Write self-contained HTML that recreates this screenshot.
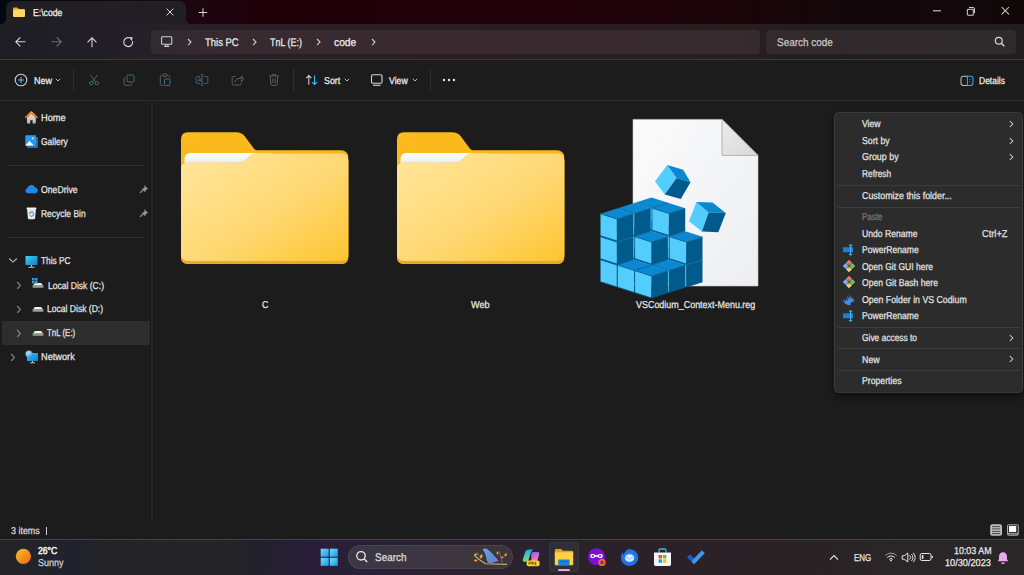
<!DOCTYPE html>
<html><head><meta charset="utf-8"><style>
html,body{margin:0;padding:0}
body{width:1024px;height:575px;overflow:hidden;position:relative;background:#1c1c1c;font-family:"Liberation Sans", sans-serif}
.t{position:absolute;line-height:1;white-space:nowrap;transform-origin:0 0;text-rendering:geometricPrecision;-webkit-text-stroke:0.25px currentColor}
.r{position:absolute}
.s{position:absolute;overflow:visible}
</style></head><body>
<div class="r" style="left:0px;top:0px;width:1024px;height:24px;background:linear-gradient(90deg,#050812 0%,#0e0a14 10%,#1b0710 18%,#1f0009 25%,#200009 55%,#1a0408 72%,#13060a 83%,#110709 100%);"></div>
<div class="r" style="left:0px;top:24px;width:1024px;height:35px;background:linear-gradient(90deg,#1d1d24 0%,#221e27 10%,#28202a 18%,#2a1e23 35%,#2a1d22 60%,#271e21 72%,#221e20 83%,#221e20 100%);"></div>
<div class="r" style="left:0px;top:59px;width:1024px;height:1px;background:#3a3a3a;"></div>
<div class="r" style="left:0px;top:60px;width:1024px;height:40px;background:#1c1c1c;"></div>
<div class="r" style="left:0px;top:100px;width:1024px;height:1px;background:#2b2b2b;"></div>
<div class="r" style="left:0px;top:101px;width:1024px;height:438px;background:#1c1c1c;"></div>
<div class="r" style="left:150px;top:101px;width:1px;height:421px;background:#181818;"></div>
<div class="r" style="left:151px;top:101px;width:2px;height:421px;background:#262626;"></div>
<div class="r" style="left:153px;top:101px;width:1px;height:421px;background:#181818;"></div>
<div class="r" style="left:6px;top:1px;width:180px;height:23px;background:#211f24;border-radius:7px 7px 0 0"></div>
<div class="r" style="left:1px;top:19px;width:5px;height:5px;background:radial-gradient(circle at 0 0,transparent 4.6px,#201e24 5.2px)"></div>
<div class="r" style="left:186px;top:19px;width:5px;height:5px;background:radial-gradient(circle at 100% 0,transparent 4.6px,#221e25 5.2px)"></div>
<svg class="s" style="left:12px;top:6px;" width="14" height="12" viewBox="0 0 14 12"><path d="M1 2.5a1 1 0 0 1 1-1h3.5l1.5 1.5h5a1 1 0 0 1 1 1V4H1z" fill="#e9a812"/><rect x="1" y="3.6" width="12" height="7.4" rx="1" fill="#ffd766"/></svg>
<div class="t" style="left:32.90px;top:8.70px;font-size:10px;color:#f5f5f5;font-weight:400;transform:scaleX(0.8641);">E:\code</div>
<svg class="s" style="left:165px;top:7px;" width="10" height="10" viewBox="0 0 10 10"><path d="M1.6 1.6l6.8 6.8M8.4 1.6l-6.8 6.8" stroke="#d8d8d8" stroke-width="1"/></svg>
<svg class="s" style="left:198px;top:7px;" width="11" height="11" viewBox="0 0 11 11"><path d="M5 1.3v8.4M0.8 5.5h8.4" stroke="#d8d8d8" stroke-width="1"/></svg>
<svg class="s" style="left:932px;top:6px;" width="12" height="10" viewBox="0 0 12 10"><path d="M1 4.8h8" stroke="#cfcfcf" stroke-width="1.1"/></svg>
<svg class="s" style="left:965px;top:5px;" width="12" height="12" viewBox="0 0 12 12"><rect x="2.3" y="4.2" width="6" height="6" rx="1" fill="none" stroke="#cfcfcf" stroke-width="1.05"/><path d="M4 2.4h3.8a1.7 1.7 0 0 1 1.7 1.7v3.8" fill="none" stroke="#cfcfcf" stroke-width="1.05"/></svg>
<svg class="s" style="left:1000px;top:6px;" width="11" height="10" viewBox="0 0 11 10"><path d="M1.6 1l7.4 7.4M9 1L1.6 8.4" stroke="#cfcfcf" stroke-width="1.05"/></svg>
<svg class="s" style="left:14px;top:36px;" width="13" height="12" viewBox="0 0 13 12"><path d="M11.5 5.8H2M6.3 1.3L1.8 5.8l4.5 4.5" fill="none" stroke="#d6d6d6" stroke-width="1.1"/></svg>
<svg class="s" style="left:50px;top:36px;" width="13" height="12" viewBox="0 0 13 12"><path d="M1.5 5.8H11M6.7 1.3l4.5 4.5-4.5 4.5" fill="none" stroke="#6e6e6e" stroke-width="1.1"/></svg>
<svg class="s" style="left:86px;top:36px;" width="12" height="12" viewBox="0 0 12 12"><path d="M6 11.3V1.8M1.5 6.3L6 1.8l4.5 4.5" fill="none" stroke="#d6d6d6" stroke-width="1.1"/></svg>
<svg class="s" style="left:122px;top:36px;" width="13" height="13" viewBox="0 0 13 13"><path d="M10.55 5.2A4.45 4.45 0 1 1 7.2 1.8" fill="none" stroke="#d6d6d6" stroke-width="1.1"/><path d="M6.6 0.9L10.6 1.3 9.9 5.1z" fill="#d6d6d6"/></svg>
<div class="r" style="left:151px;top:30px;width:609px;height:24px;background:linear-gradient(90deg,#302a31,#362a30 10%,#3a2a2f 45%,#392a2f 75%,#352b2f);border-radius:4px"></div>
<svg class="s" style="left:160px;top:35px;" width="14" height="14" viewBox="0 0 14 14"><rect x="1.6" y="1.7" width="10.2" height="7.6" rx="1" fill="none" stroke="#d0d0d0" stroke-width="1.05"/><path d="M4.2 11.4h5M5.6 9.4v2M7.8 9.4v2" stroke="#d0d0d0" stroke-width="1.05"/></svg>
<svg class="s" style="left:185.5px;top:37.9px;" width="7" height="8.2" viewBox="0 0 7 8.2"><path d="M2 1l3 3.1-3 3.1" fill="none" stroke="#cfcfcf" stroke-width="1.1"/></svg>
<div class="t" style="left:205.30px;top:37.90px;font-size:11px;color:#ededed;font-weight:400;transform:scaleX(0.8615);">This PC</div>
<svg class="s" style="left:250.5px;top:37.9px;" width="7" height="8.2" viewBox="0 0 7 8.2"><path d="M2 1l3 3.1-3 3.1" fill="none" stroke="#cfcfcf" stroke-width="1.1"/></svg>
<div class="t" style="left:270.00px;top:37.90px;font-size:11px;color:#ededed;font-weight:400;transform:scaleX(0.8137);">TnL (E:)</div>
<svg class="s" style="left:314.5px;top:37.9px;" width="7" height="8.2" viewBox="0 0 7 8.2"><path d="M2 1l3 3.1-3 3.1" fill="none" stroke="#cfcfcf" stroke-width="1.1"/></svg>
<div class="t" style="left:333.60px;top:38.00px;font-size:11px;color:#ededed;font-weight:400;transform:scaleX(0.9351);">code</div>
<svg class="s" style="left:369.5px;top:37.9px;" width="7" height="8.2" viewBox="0 0 7 8.2"><path d="M2 1l3 3.1-3 3.1" fill="none" stroke="#cfcfcf" stroke-width="1.1"/></svg>
<div class="r" style="left:766px;top:30px;width:250px;height:24px;background:linear-gradient(90deg,#332a2d,#302a2c 30%,#2f2a2c);border-radius:4px"></div>
<div class="t" style="left:777.40px;top:38.00px;font-size:11px;color:#c8c4c6;font-weight:400;transform:scaleX(0.9050);">Search code</div>
<svg class="s" style="left:994px;top:36px;" width="12" height="12" viewBox="0 0 12 12"><circle cx="4.8" cy="4.8" r="3.4" fill="none" stroke="#d8d8d8" stroke-width="1.2"/><path d="M7.3 7.3l3 3" stroke="#d8d8d8" stroke-width="1.4"/></svg>
<svg class="s" style="left:14px;top:73px;" width="14" height="14" viewBox="0 0 14 14"><circle cx="7" cy="7" r="5.8" fill="none" stroke="#cfcfcf" stroke-width="1.1"/><path d="M7 4v6M4 7h6" stroke="#4cc2ff" stroke-width="1.1"/></svg>
<div class="t" style="left:33.90px;top:76.90px;font-size:10px;color:#f0f0f0;font-weight:400;transform:scaleX(0.8987);">New</div>
<svg class="s" style="left:55px;top:77px;" width="6" height="6" viewBox="0 0 6 6"><path d="M0.8 1.8l2.2 2.2 2.2-2.2" fill="none" stroke="#cfcfcf" stroke-width="0.9"/></svg>
<div class="r" style="left:73px;top:69px;width:1px;height:22px;background:#2e2e2e;"></div>
<svg class="s" style="left:88px;top:74px;" width="12" height="12" viewBox="0 0 12 12"><path d="M2.5 1l5 6.8M9.5 1l-5 6.8" stroke="#5c5c5c" stroke-width="1"/><circle cx="3.3" cy="9.2" r="1.7" fill="none" stroke="#3b6d8c" stroke-width="1"/><circle cx="8.7" cy="9.2" r="1.7" fill="none" stroke="#3b6d8c" stroke-width="1"/></svg>
<svg class="s" style="left:123px;top:74px;" width="13" height="12" viewBox="0 0 13 12"><path d="M2.5 3.5h-0.3A1.3 1.3 0 0 0 1 4.8v5.2a1.3 1.3 0 0 0 1.3 1.3h5.2A1.3 1.3 0 0 0 8.8 10v-0.3" fill="none" stroke="#5c5c5c" stroke-width="1"/><rect x="4" y="1" width="7" height="7" rx="1.2" fill="none" stroke="#3b6d8c" stroke-width="1"/></svg>
<svg class="s" style="left:159px;top:73px;" width="13" height="13" viewBox="0 0 13 13"><path d="M3.5 2.5h-1A1.2 1.2 0 0 0 1.3 3.7v7.6a1.2 1.2 0 0 0 1.2 1.2h2M8.5 2.5h1a1.2 1.2 0 0 1 1.2 1.2v1" fill="none" stroke="#5c5c5c" stroke-width="1"/><rect x="4" y="1" width="4" height="2.5" rx="0.6" fill="none" stroke="#5c5c5c" stroke-width="1"/><rect x="5.5" y="6" width="5.5" height="6.5" rx="0.8" fill="none" stroke="#3b6d8c" stroke-width="1"/></svg>
<svg class="s" style="left:195px;top:74px;" width="14" height="12" viewBox="0 0 14 12"><path d="M5 2.5H2.5A1.3 1.3 0 0 0 1.2 3.8v4.4A1.3 1.3 0 0 0 2.5 9.5H5M9 2.5h2.5a1.3 1.3 0 0 1 1.3 1.3v4.4a1.3 1.3 0 0 1-1.3 1.3H9" fill="none" stroke="#5c5c5c" stroke-width="1"/><path d="M7 0.8v10.4M5.8 0.8h2.4M5.8 11.2h2.4" stroke="#3b6d8c" stroke-width="1"/><path d="M3.2 7.8l1.5-4 1.5 4M3.7 6.6h2" fill="none" stroke="#3b6d8c" stroke-width="0.8"/></svg>
<svg class="s" style="left:231px;top:74px;" width="13" height="12" viewBox="0 0 13 12"><path d="M4.5 2.5H2.5A1.3 1.3 0 0 0 1.2 3.8v5.9A1.3 1.3 0 0 0 2.5 11h6.2a1.3 1.3 0 0 0 1.3-1.3V8.5" fill="none" stroke="#5c5c5c" stroke-width="1"/><path d="M4 8.3c0.3-2.6 2.3-4 5-4h1.5V2l2.2 2.8-2.2 2.8V5.6" fill="none" stroke="#3b6d8c" stroke-width="1"/></svg>
<svg class="s" style="left:268px;top:73px;" width="12" height="13" viewBox="0 0 12 13"><path d="M1 3h10M4.3 3V1.6h3.4V3M2.2 3l0.7 8.2a1.2 1.2 0 0 0 1.2 1.1h3.8a1.2 1.2 0 0 0 1.2-1.1L9.8 3M4.8 5.5v4.5M7.2 5.5v4.5" fill="none" stroke="#5c5c5c" stroke-width="1"/></svg>
<div class="r" style="left:293px;top:69px;width:1px;height:22px;background:#2e2e2e;"></div>
<svg class="s" style="left:305px;top:74px;" width="14" height="12" viewBox="0 0 14 12"><path d="M3.8 10.8V1.6M1.2 4.2l2.6-2.6 2.6 2.6" fill="none" stroke="#d4d4d4" stroke-width="1.05"/><path d="M9.6 1.4v9.2M7 8l2.6 2.6 2.6-2.6" fill="none" stroke="#4cc2ff" stroke-width="1.05"/></svg>
<div class="t" style="left:323.50px;top:76.90px;font-size:10px;color:#f0f0f0;font-weight:400;transform:scaleX(0.8833);">Sort</div>
<svg class="s" style="left:344px;top:77px;" width="6" height="6" viewBox="0 0 6 6"><path d="M0.8 1.8l2.2 2.2 2.2-2.2" fill="none" stroke="#cfcfcf" stroke-width="0.9"/></svg>
<svg class="s" style="left:370px;top:73px;" width="14" height="14" viewBox="0 0 14 14"><rect x="1.5" y="1.8" width="10.5" height="8.5" rx="1.2" fill="none" stroke="#d4d4d4" stroke-width="1.1"/><path d="M3 12.3h7.5" stroke="#d4d4d4" stroke-width="1.1"/></svg>
<div class="t" style="left:389.00px;top:76.90px;font-size:10px;color:#f0f0f0;font-weight:400;transform:scaleX(0.8713);">View</div>
<svg class="s" style="left:412px;top:77px;" width="6" height="6" viewBox="0 0 6 6"><path d="M0.8 1.8l2.2 2.2 2.2-2.2" fill="none" stroke="#cfcfcf" stroke-width="0.9"/></svg>
<div class="r" style="left:430px;top:69px;width:1px;height:22px;background:#2e2e2e;"></div>
<svg class="s" style="left:442px;top:78px;" width="14" height="4" viewBox="0 0 14 4"><circle cx="2" cy="2" r="1.2" fill="#e6e6e6"/><circle cx="7" cy="2" r="1.2" fill="#e6e6e6"/><circle cx="12" cy="2" r="1.2" fill="#e6e6e6"/></svg>
<svg class="s" style="left:959.5px;top:74.5px;" width="15" height="12" viewBox="0 0 15 12"><path d="M7.4 1.2H3.3A2.3 2.3 0 0 0 1 3.5v4.6A2.3 2.3 0 0 0 3.3 10.4h4.1" fill="none" stroke="#bdbdbd" stroke-width="1.05"/><path d="M7.4 1.2h3.3a2.3 2.3 0 0 1 2.3 2.3v4.6a2.3 2.3 0 0 1-2.3 2.3H7.4z" fill="none" stroke="#3aa8e8" stroke-width="1.05"/><path d="M10 4.2v0.9M10 6.5v0.9" stroke="#3aa8e8" stroke-width="0.9"/></svg>
<div class="t" style="left:978.75px;top:76.90px;font-size:10px;color:#f0f0f0;font-weight:400;transform:scaleX(0.8505);">Details</div>
<svg class="s" style="left:24px;top:110px;" width="15" height="15" viewBox="0 0 15 15"><defs><linearGradient id="hroof" x1="0" y1="0" x2="0" y2="1"><stop offset="0" stop-color="#ffa040"/><stop offset="1" stop-color="#e8680c"/></linearGradient><linearGradient id="hbody" x1="0" y1="0" x2="0" y2="1"><stop offset="0" stop-color="#e0e0e0"/><stop offset="1" stop-color="#b8b8b8"/></linearGradient></defs><path d="M3 7.6V12.6Q3 13.6 4 13.6H6.2V10.2H8.6V13.6H10.8Q11.8 13.6 11.8 12.6V7.6L7.4 3.6z" fill="url(#hbody)"/><path d="M1.8 7.4L7.4 2.2 13 7.4" fill="none" stroke="url(#hroof)" stroke-width="1.8" stroke-linejoin="round" stroke-linecap="round"/></svg>
<div class="t" style="left:41.40px;top:114.00px;font-size:10px;color:#e8e8e8;font-weight:400;transform:scaleX(0.9258);">Home</div>
<svg class="s" style="left:24px;top:134px;" width="15" height="15" viewBox="0 0 15 15"><rect x="3" y="3" width="11" height="11" rx="1" fill="#1a6fc2"/><rect x="1.3" y="1.3" width="10.7" height="10.7" rx="1" fill="#2a9af0"/><path d="M1.3 11.4l4.2-4.5 4.2 4.5z" fill="#fff"/><circle cx="8.8" cy="4.3" r="0.9" fill="#fff"/></svg>
<div class="t" style="left:41.40px;top:137.50px;font-size:10px;color:#e8e8e8;font-weight:400;transform:scaleX(0.8460);">Gallery</div>
<div class="r" style="left:8px;top:165px;width:136px;height:1px;background:#2e2e2e;"></div>
<svg class="s" style="left:24px;top:183px;" width="15" height="12" viewBox="0 0 15 12"><path d="M3.6 10.2A2.6 2.6 0 0 1 3.4 5.1 4.2 4.2 0 0 1 11.2 4.4 3 3 0 0 1 11.8 10.2z" fill="#1d8ae6"/></svg>
<div class="t" style="left:41.40px;top:185.50px;font-size:10px;color:#e8e8e8;font-weight:400;transform:scaleX(0.8665);">OneDrive</div>
<svg class="s" style="left:139px;top:184px;" width="10" height="10" viewBox="0 0 10 10"><path d="M5.2 1l3.8 3.8-1.2 0.6-1.6 1.6 0 1.4L2.6 4.8 4 4.8 5.6 3.2z" fill="#8d959a"/><path d="M3.8 6.2L1 9" stroke="#8d959a" stroke-width="1.2"/></svg>
<svg class="s" style="left:25px;top:206px;" width="13" height="14" viewBox="0 0 13 14"><path d="M2 2.2h9l-0.9 10a1.2 1.2 0 0 1-1.2 1H4.1a1.2 1.2 0 0 1-1.2-1z" fill="#e9e9e9"/><rect x="1.6" y="1.4" width="9.8" height="1.6" rx="0.6" fill="#f6f6f6"/><path d="M4.5 8.2a2.2 2.2 0 0 1 3.8-1.6M8.6 7.4a2.2 2.2 0 0 1-3.6 2.2" fill="none" stroke="#2a8fe4" stroke-width="1.1"/></svg>
<div class="t" style="left:41.40px;top:210.00px;font-size:10px;color:#e8e8e8;font-weight:400;transform:scaleX(0.8447);">Recycle Bin</div>
<svg class="s" style="left:139px;top:208px;" width="10" height="10" viewBox="0 0 10 10"><path d="M5.2 1l3.8 3.8-1.2 0.6-1.6 1.6 0 1.4L2.6 4.8 4 4.8 5.6 3.2z" fill="#8d959a"/><path d="M3.8 6.2L1 9" stroke="#8d959a" stroke-width="1.2"/></svg>
<div class="r" style="left:8px;top:237px;width:136px;height:1px;background:#2e2e2e;"></div>
<svg class="s" style="left:8px;top:257px;" width="10" height="7" viewBox="0 0 10 7"><path d="M1.2 1.5l3.8 3.6 3.8-3.6" fill="none" stroke="#b4b4b4" stroke-width="1.1"/></svg>
<svg class="s" style="left:24px;top:254px;" width="15" height="15" viewBox="0 0 15 15"><defs><linearGradient id="pcg" x1="0" y1="0" x2="1" y2="1"><stop offset="0" stop-color="#38d6ee"/><stop offset="1" stop-color="#1778cc"/></linearGradient></defs><rect x="1.5" y="2" width="12" height="9" rx="0.6" fill="url(#pcg)"/><path d="M7.5 11v1.5M4.5 13.2h6" stroke="#c8c8c8" stroke-width="1.1"/></svg>
<div class="t" style="left:41.30px;top:257.45px;font-size:10px;color:#e8e8e8;font-weight:400;transform:scaleX(0.8296);">This PC</div>
<div class="r" style="left:2px;top:321px;width:148px;height:24px;background:#2d2d2d;"></div>
<svg class="s" style="left:16px;top:281px;" width="6" height="9" viewBox="0 0 6 9"><path d="M1.2 1l3.2 3.4-3.2 3.4" fill="none" stroke="#8a8a8a" stroke-width="1.1"/></svg>
<svg class="s" style="left:32px;top:282px;" width="12" height="7" viewBox="0 0 12 7"><path d="M1.5 3.2Q2 1 3.5 1h5Q10 1 10.5 3.2z" fill="#f4f4f4"/><rect x="0.6" y="3" width="10.8" height="2.8" rx="0.6" fill="#9c9c9c"/><rect x="1.6" y="4" width="2" height="0.9" fill="#3fc43f"/></svg>
<svg class="s" style="left:31.5px;top:278px;" width="6" height="6" viewBox="0 0 6 6"><rect x="0" y="0" width="2.5" height="2.5" fill="#2a9af0"/><rect x="3" y="0" width="2.5" height="2.5" fill="#2a9af0"/><rect x="0" y="3" width="2.5" height="2.5" fill="#2a9af0"/><rect x="3" y="3" width="2.5" height="2.5" fill="#2a9af0"/></svg>
<div class="t" style="left:47.50px;top:281.70px;font-size:10px;color:#e8e8e8;font-weight:400;transform:scaleX(0.8540);">Local Disk (C:)</div>
<svg class="s" style="left:16px;top:305px;" width="6" height="9" viewBox="0 0 6 9"><path d="M1.2 1l3.2 3.4-3.2 3.4" fill="none" stroke="#8a8a8a" stroke-width="1.1"/></svg>
<svg class="s" style="left:32px;top:306px;" width="12" height="7" viewBox="0 0 12 7"><path d="M1.5 3.2Q2 1 3.5 1h5Q10 1 10.5 3.2z" fill="#f4f4f4"/><rect x="0.6" y="3" width="10.8" height="2.8" rx="0.6" fill="#9c9c9c"/><rect x="1.6" y="4" width="2" height="0.9" fill="#3fc43f"/></svg>
<div class="t" style="left:47.30px;top:305.30px;font-size:10px;color:#e8e8e8;font-weight:400;transform:scaleX(0.8556);">Local Disk (D:)</div>
<svg class="s" style="left:16px;top:329px;" width="6" height="9" viewBox="0 0 6 9"><path d="M1.2 1l3.2 3.4-3.2 3.4" fill="none" stroke="#8a8a8a" stroke-width="1.1"/></svg>
<svg class="s" style="left:32px;top:330px;" width="12" height="7" viewBox="0 0 12 7"><path d="M1.5 3.2Q2 1 3.5 1h5Q10 1 10.5 3.2z" fill="#f4f4f4"/><rect x="0.6" y="3" width="10.8" height="2.8" rx="0.6" fill="#9c9c9c"/><rect x="1.6" y="4" width="2" height="0.9" fill="#3fc43f"/></svg>
<div class="t" style="left:47.30px;top:329.30px;font-size:10px;color:#e8e8e8;font-weight:400;transform:scaleX(0.7888);">TnL (E:)</div>
<svg class="s" style="left:10px;top:353px;" width="6" height="9" viewBox="0 0 6 9"><path d="M1.2 1l3.2 3.4-3.2 3.4" fill="none" stroke="#8a8a8a" stroke-width="1.1"/></svg>
<svg class="s" style="left:24px;top:349px;" width="15" height="15" viewBox="0 0 15 15"><defs><linearGradient id="ng" x1="0" y1="0" x2="1" y2="1"><stop offset="0" stop-color="#30c8ea"/><stop offset="1" stop-color="#1778cc"/></linearGradient><radialGradient id="gl" cx="0.4" cy="0.35" r="0.7"><stop offset="0" stop-color="#bfe6ff"/><stop offset="1" stop-color="#2f8fd8"/></radialGradient></defs><rect x="3" y="4" width="11" height="8" rx="0.5" fill="url(#ng)"/><path d="M8.5 12v1.3M6 13.8h5" stroke="#c8c8c8" stroke-width="1"/><circle cx="5" cy="5" r="3.6" fill="url(#gl)"/></svg>
<div class="t" style="left:41.40px;top:353.20px;font-size:10px;color:#e8e8e8;font-weight:400;transform:scaleX(0.9210);">Network</div>
<svg class="s" style="left:180.6px;top:132px;" width="170" height="134" viewBox="0 0 170 134"><defs><linearGradient id="fb180" x1="0" y1="0" x2="1" y2="1"><stop offset="0" stop-color="#fcba1c"/><stop offset="1" stop-color="#f4b51c"/></linearGradient><linearGradient id="ff180" x1="0" y1="0" x2="1" y2="1"><stop offset="0" stop-color="#ffe69c"/><stop offset="0.55" stop-color="#ffd873"/><stop offset="1" stop-color="#fdc52f"/></linearGradient><linearGradient id="fp180" x1="0" y1="0" x2="0" y2="1"><stop offset="0" stop-color="#ffffff"/><stop offset="1" stop-color="#d9dde3"/></linearGradient></defs><path d="M0 125V7.3Q0 0.3 7 0.3H55Q60.5 0.3 63.5 4L73 16.8Q74 18.2 76 18.2H159.5Q167.3 18.2 167.3 26V125Q167.3 132 160.3 132H7Q0 132 0 125z" fill="url(#fb180)"/><path d="M3.5 27Q3.5 21 9.5 21H90V40H3.5z" fill="url(#fp180)"/><path d="M0 125V37Q0 30.8 6 30.8H57Q62 30.8 65.5 27.3L69.5 23.5Q71.5 21.5 75 21.5H160.3Q167.3 21.5 167.3 28.5V125Q167.3 132 160.3 132H7Q0 132 0 125z" fill="#eaa928"/><path d="M0 122V37Q0 30.8 6 30.8H57Q62 30.8 65.5 27.3L69.5 23.5Q71.5 21.5 75 21.5H160.3Q167.3 21.5 167.3 28.5V122Q167.3 129 160.3 129H7Q0 129 0 122z" fill="url(#ff180)"/></svg>
<div class="t" style="left:261.99px;top:300.70px;font-size:10px;color:#e8e8e8;font-weight:400;transform:scaleX(0.8900);">C</div>
<svg class="s" style="left:396.6px;top:132px;" width="170" height="134" viewBox="0 0 170 134"><defs><linearGradient id="fb396" x1="0" y1="0" x2="1" y2="1"><stop offset="0" stop-color="#fcba1c"/><stop offset="1" stop-color="#f4b51c"/></linearGradient><linearGradient id="ff396" x1="0" y1="0" x2="1" y2="1"><stop offset="0" stop-color="#ffe69c"/><stop offset="0.55" stop-color="#ffd873"/><stop offset="1" stop-color="#fdc52f"/></linearGradient><linearGradient id="fp396" x1="0" y1="0" x2="0" y2="1"><stop offset="0" stop-color="#ffffff"/><stop offset="1" stop-color="#d9dde3"/></linearGradient></defs><path d="M0 125V7.3Q0 0.3 7 0.3H55Q60.5 0.3 63.5 4L73 16.8Q74 18.2 76 18.2H159.5Q167.3 18.2 167.3 26V125Q167.3 132 160.3 132H7Q0 132 0 125z" fill="url(#fb396)"/><path d="M3.5 27Q3.5 21 9.5 21H90V40H3.5z" fill="url(#fp396)"/><path d="M0 125V37Q0 30.8 6 30.8H57Q62 30.8 65.5 27.3L69.5 23.5Q71.5 21.5 75 21.5H160.3Q167.3 21.5 167.3 28.5V125Q167.3 132 160.3 132H7Q0 132 0 125z" fill="#eaa928"/><path d="M0 122V37Q0 30.8 6 30.8H57Q62 30.8 65.5 27.3L69.5 23.5Q71.5 21.5 75 21.5H160.3Q167.3 21.5 167.3 28.5V122Q167.3 129 160.3 129H7Q0 129 0 122z" fill="url(#ff396)"/></svg>
<div class="t" style="left:471.10px;top:300.70px;font-size:10px;color:#e8e8e8;font-weight:400;transform:scaleX(0.9127);">Web</div>
<svg class="s" style="left:590px;top:110px;" width="180" height="200" viewBox="0 0 180 200"><defs><linearGradient id="paper" x1="0" y1="0" x2="1" y2="1"><stop offset="0" stop-color="#fbfbfb"/><stop offset="1" stop-color="#eceef1"/></linearGradient><linearGradient id="fold" x1="0" y1="0" x2="1" y2="1"><stop offset="0" stop-color="#ececec"/><stop offset="1" stop-color="#d8d8d8"/></linearGradient></defs><path d="M43 9.400000000000006H132L168 45.400000000000006V176H43z" fill="url(#paper)" stroke="#c9c9c9" stroke-width="0.6"/><path d="M132 9.400000000000006V45.400000000000006H168z" fill="url(#fold)" stroke="#a3a3a3" stroke-width="0.8" stroke-linejoin="round"/><polygon points="61.50,166.00 61.50,144.00 45.10,138.80 45.10,160.80" fill="#52cdfd"/><polygon points="61.50,166.00 77.90,160.80 77.90,138.80 61.50,144.00" fill="#005b8c"/><polygon points="61.50,144.00 45.10,138.80 61.50,133.60 77.90,138.80" fill="#0a88d0"/><polyline points="45.10,160.80 61.50,166.00 77.90,160.80" fill="none" stroke="#0b4f7c" stroke-width="0.9"/><polyline points="45.10,138.80 61.50,144.00 77.90,138.80" fill="none" stroke="#0b5f96" stroke-width="0.7"/><polygon points="61.50,143.00 61.50,121.00 45.10,115.80 45.10,137.80" fill="#52cdfd"/><polygon points="61.50,143.00 77.90,137.80 77.90,115.80 61.50,121.00" fill="#005b8c"/><polygon points="61.50,121.00 45.10,115.80 61.50,110.60 77.90,115.80" fill="#0a88d0"/><polyline points="45.10,137.80 61.50,143.00 77.90,137.80" fill="none" stroke="#0b4f7c" stroke-width="0.9"/><polyline points="45.10,115.80 61.50,121.00 77.90,115.80" fill="none" stroke="#0b5f96" stroke-width="0.7"/><polygon points="61.50,120.00 61.50,98.00 45.10,92.80 45.10,114.80" fill="#52cdfd"/><polygon points="61.50,120.00 77.90,114.80 77.90,92.80 61.50,98.00" fill="#005b8c"/><polygon points="61.50,98.00 45.10,92.80 61.50,87.60 77.90,92.80" fill="#0a88d0"/><polyline points="45.10,114.80 61.50,120.00 77.90,114.80" fill="none" stroke="#0b4f7c" stroke-width="0.9"/><polyline points="45.10,92.80 61.50,98.00 77.90,92.80" fill="none" stroke="#0b5f96" stroke-width="0.7"/><polygon points="78.80,171.50 78.80,149.50 62.40,144.30 62.40,166.30" fill="#52cdfd"/><polygon points="78.80,171.50 95.20,166.30 95.20,144.30 78.80,149.50" fill="#005b8c"/><polygon points="78.80,149.50 62.40,144.30 78.80,139.10 95.20,144.30" fill="#0a88d0"/><polyline points="62.40,166.30 78.80,171.50 95.20,166.30" fill="none" stroke="#0b4f7c" stroke-width="0.9"/><polyline points="62.40,144.30 78.80,149.50 95.20,144.30" fill="none" stroke="#0b5f96" stroke-width="0.7"/><polygon points="44.20,171.50 44.20,149.50 27.80,144.30 27.80,166.30" fill="#52cdfd"/><polygon points="44.20,171.50 60.60,166.30 60.60,144.30 44.20,149.50" fill="#005b8c"/><polygon points="44.20,149.50 27.80,144.30 44.20,139.10 60.60,144.30" fill="#0a88d0"/><polyline points="27.80,166.30 44.20,171.50 60.60,166.30" fill="none" stroke="#0b4f7c" stroke-width="0.9"/><polyline points="27.80,144.30 44.20,149.50 60.60,144.30" fill="none" stroke="#0b5f96" stroke-width="0.7"/><polygon points="78.80,148.50 78.80,126.50 62.40,121.30 62.40,143.30" fill="#52cdfd"/><polygon points="78.80,148.50 95.20,143.30 95.20,121.30 78.80,126.50" fill="#005b8c"/><polygon points="78.80,126.50 62.40,121.30 78.80,116.10 95.20,121.30" fill="#0a88d0"/><polyline points="62.40,143.30 78.80,148.50 95.20,143.30" fill="none" stroke="#0b4f7c" stroke-width="0.9"/><polyline points="62.40,121.30 78.80,126.50 95.20,121.30" fill="none" stroke="#0b5f96" stroke-width="0.7"/><polygon points="44.20,148.50 44.20,126.50 27.80,121.30 27.80,143.30" fill="#52cdfd"/><polygon points="44.20,148.50 60.60,143.30 60.60,121.30 44.20,126.50" fill="#005b8c"/><polygon points="44.20,126.50 27.80,121.30 44.20,116.10 60.60,121.30" fill="#0a88d0"/><polyline points="27.80,143.30 44.20,148.50 60.60,143.30" fill="none" stroke="#0b4f7c" stroke-width="0.9"/><polyline points="27.80,121.30 44.20,126.50 60.60,121.30" fill="none" stroke="#0b5f96" stroke-width="0.7"/><polygon points="78.80,125.50 78.80,103.50 62.40,98.30 62.40,120.30" fill="#52cdfd"/><polygon points="78.80,125.50 95.20,120.30 95.20,98.30 78.80,103.50" fill="#005b8c"/><polygon points="78.80,103.50 62.40,98.30 78.80,93.10 95.20,98.30" fill="#0a88d0"/><polyline points="62.40,120.30 78.80,125.50 95.20,120.30" fill="none" stroke="#0b4f7c" stroke-width="0.9"/><polyline points="62.40,98.30 78.80,103.50 95.20,98.30" fill="none" stroke="#0b5f96" stroke-width="0.7"/><polygon points="44.20,125.50 44.20,103.50 27.80,98.30 27.80,120.30" fill="#52cdfd"/><polygon points="44.20,125.50 60.60,120.30 60.60,98.30 44.20,103.50" fill="#005b8c"/><polygon points="44.20,103.50 27.80,98.30 44.20,93.10 60.60,98.30" fill="#0a88d0"/><polyline points="27.80,120.30 44.20,125.50 60.60,120.30" fill="none" stroke="#0b4f7c" stroke-width="0.9"/><polyline points="27.80,98.30 44.20,103.50 60.60,98.30" fill="none" stroke="#0b5f96" stroke-width="0.7"/><polygon points="96.10,177.00 96.10,155.00 79.70,149.80 79.70,171.80" fill="#52cdfd"/><polygon points="96.10,177.00 112.50,171.80 112.50,149.80 96.10,155.00" fill="#005b8c"/><polygon points="96.10,155.00 79.70,149.80 96.10,144.60 112.50,149.80" fill="#0a88d0"/><polyline points="79.70,171.80 96.10,177.00 112.50,171.80" fill="none" stroke="#0b4f7c" stroke-width="0.9"/><polyline points="79.70,149.80 96.10,155.00 112.50,149.80" fill="none" stroke="#0b5f96" stroke-width="0.7"/><polygon points="61.50,177.00 61.50,155.00 45.10,149.80 45.10,171.80" fill="#52cdfd"/><polygon points="61.50,177.00 77.90,171.80 77.90,149.80 61.50,155.00" fill="#005b8c"/><polygon points="61.50,155.00 45.10,149.80 61.50,144.60 77.90,149.80" fill="#0a88d0"/><polyline points="45.10,171.80 61.50,177.00 77.90,171.80" fill="none" stroke="#0b4f7c" stroke-width="0.9"/><polyline points="45.10,149.80 61.50,155.00 77.90,149.80" fill="none" stroke="#0b5f96" stroke-width="0.7"/><polygon points="26.90,177.00 26.90,155.00 10.50,149.80 10.50,171.80" fill="#52cdfd"/><polygon points="26.90,177.00 43.30,171.80 43.30,149.80 26.90,155.00" fill="#005b8c"/><polygon points="26.90,155.00 10.50,149.80 26.90,144.60 43.30,149.80" fill="#0a88d0"/><polyline points="10.50,171.80 26.90,177.00 43.30,171.80" fill="none" stroke="#0b4f7c" stroke-width="0.9"/><polyline points="10.50,149.80 26.90,155.00 43.30,149.80" fill="none" stroke="#0b5f96" stroke-width="0.7"/><polygon points="96.10,154.00 96.10,132.00 79.70,126.80 79.70,148.80" fill="#52cdfd"/><polygon points="96.10,154.00 112.50,148.80 112.50,126.80 96.10,132.00" fill="#005b8c"/><polygon points="96.10,132.00 79.70,126.80 96.10,121.60 112.50,126.80" fill="#0a88d0"/><polyline points="79.70,148.80 96.10,154.00 112.50,148.80" fill="none" stroke="#0b4f7c" stroke-width="0.9"/><polyline points="79.70,126.80 96.10,132.00 112.50,126.80" fill="none" stroke="#0b5f96" stroke-width="0.7"/><polygon points="61.50,154.00 61.50,132.00 45.10,126.80 45.10,148.80" fill="#52cdfd"/><polygon points="61.50,154.00 77.90,148.80 77.90,126.80 61.50,132.00" fill="#005b8c"/><polygon points="61.50,132.00 45.10,126.80 61.50,121.60 77.90,126.80" fill="#0a88d0"/><polyline points="45.10,148.80 61.50,154.00 77.90,148.80" fill="none" stroke="#0b4f7c" stroke-width="0.9"/><polyline points="45.10,126.80 61.50,132.00 77.90,126.80" fill="none" stroke="#0b5f96" stroke-width="0.7"/><polygon points="26.90,154.00 26.90,132.00 10.50,126.80 10.50,148.80" fill="#52cdfd"/><polygon points="26.90,154.00 43.30,148.80 43.30,126.80 26.90,132.00" fill="#005b8c"/><polygon points="26.90,132.00 10.50,126.80 26.90,121.60 43.30,126.80" fill="#0a88d0"/><polyline points="10.50,148.80 26.90,154.00 43.30,148.80" fill="none" stroke="#0b4f7c" stroke-width="0.9"/><polyline points="10.50,126.80 26.90,132.00 43.30,126.80" fill="none" stroke="#0b5f96" stroke-width="0.7"/><polygon points="26.90,131.00 26.90,109.00 10.50,103.80 10.50,125.80" fill="#52cdfd"/><polygon points="26.90,131.00 43.30,125.80 43.30,103.80 26.90,109.00" fill="#005b8c"/><polygon points="26.90,109.00 10.50,103.80 26.90,98.60 43.30,103.80" fill="#0a88d0"/><polyline points="10.50,125.80 26.90,131.00 43.30,125.80" fill="none" stroke="#0b4f7c" stroke-width="0.9"/><polyline points="10.50,103.80 26.90,109.00 43.30,103.80" fill="none" stroke="#0b5f96" stroke-width="0.7"/><polygon points="78.80,182.50 78.80,160.50 62.40,155.30 62.40,177.30" fill="#52cdfd"/><polygon points="78.80,182.50 95.20,177.30 95.20,155.30 78.80,160.50" fill="#005b8c"/><polygon points="78.80,160.50 62.40,155.30 78.80,150.10 95.20,155.30" fill="#0a88d0"/><polyline points="62.40,177.30 78.80,182.50 95.20,177.30" fill="none" stroke="#0b4f7c" stroke-width="0.9"/><polyline points="62.40,155.30 78.80,160.50 95.20,155.30" fill="none" stroke="#0b5f96" stroke-width="0.7"/><polygon points="44.20,182.50 44.20,160.50 27.80,155.30 27.80,177.30" fill="#52cdfd"/><polygon points="44.20,182.50 60.60,177.30 60.60,155.30 44.20,160.50" fill="#005b8c"/><polygon points="44.20,160.50 27.80,155.30 44.20,150.10 60.60,155.30" fill="#0a88d0"/><polyline points="27.80,177.30 44.20,182.50 60.60,177.30" fill="none" stroke="#0b4f7c" stroke-width="0.9"/><polyline points="27.80,155.30 44.20,160.50 60.60,155.30" fill="none" stroke="#0b5f96" stroke-width="0.7"/><polygon points="61.50,188.00 61.50,166.00 45.10,160.80 45.10,182.80" fill="#52cdfd"/><polygon points="61.50,188.00 77.90,182.80 77.90,160.80 61.50,166.00" fill="#005b8c"/><polygon points="61.50,166.00 45.10,160.80 61.50,155.60 77.90,160.80" fill="#0a88d0"/><polyline points="45.10,182.80 61.50,188.00 77.90,182.80" fill="none" stroke="#0b4f7c" stroke-width="0.9"/><polyline points="45.10,160.80 61.50,166.00 77.90,160.80" fill="none" stroke="#0b5f96" stroke-width="0.7"/><polygon points="77.20,54.90 86.60,68.10 74.80,84.40 65.00,71.60" fill="#52cdfd"/><polygon points="77.20,54.90 93.20,59.70 100.50,72.30 86.60,68.10" fill="#0a88d0"/><polygon points="86.60,68.10 100.50,72.30 90.80,89.00 74.80,84.40" fill="#005b8c"/><polygon points="106.40,91.90 118.60,102.60 111.90,121.60 99.00,111.20" fill="#52cdfd"/><polygon points="106.40,91.90 122.50,92.40 135.80,103.00 118.60,102.60" fill="#0a88d0"/><polygon points="118.60,102.60 135.80,103.00 128.30,122.20 111.90,121.60" fill="#005b8c"/></svg>
<div class="t" style="left:635.70px;top:300.70px;font-size:10px;color:#e8e8e8;font-weight:400;transform:scaleX(0.8943);">VSCodium_Context-Menu.reg</div>
<div class="r" style="left:834px;top:112px;width:189px;height:281px;background:#2c2c2c;border:1px solid #3a3a3a;box-sizing:border-box;border-radius:4.5px;box-shadow:0 4px 10px rgba(0,0,0,0.45)"></div>
<div class="r" style="left:838px;top:185px;width:182px;height:1px;background:#3d3d3d;"></div>
<div class="r" style="left:838px;top:206.6px;width:182px;height:1px;background:#3d3d3d;"></div>
<div class="r" style="left:838px;top:326.5px;width:182px;height:1px;background:#3d3d3d;"></div>
<div class="r" style="left:838px;top:348.4px;width:182px;height:1px;background:#3d3d3d;"></div>
<div class="r" style="left:838px;top:370.2px;width:182px;height:1px;background:#3d3d3d;"></div>
<div class="t" style="left:862.20px;top:120.20px;font-size:10px;color:#e4e4e4;font-weight:400;transform:scaleX(0.8643);">View</div>
<svg class="s" style="left:1008px;top:119.8px;" width="7" height="8" viewBox="0 0 7 8"><path d="M1.8 1l3 3-3 3" fill="none" stroke="#d0d0d0" stroke-width="1.05"/></svg>
<div class="t" style="left:862.20px;top:137.00px;font-size:10px;color:#e4e4e4;font-weight:400;transform:scaleX(0.8712);">Sort by</div>
<svg class="s" style="left:1008px;top:136.6px;" width="7" height="8" viewBox="0 0 7 8"><path d="M1.8 1l3 3-3 3" fill="none" stroke="#d0d0d0" stroke-width="1.05"/></svg>
<div class="t" style="left:862.20px;top:153.40px;font-size:10px;color:#e4e4e4;font-weight:400;transform:scaleX(0.8923);">Group by</div>
<svg class="s" style="left:1008px;top:153.0px;" width="7" height="8" viewBox="0 0 7 8"><path d="M1.8 1l3 3-3 3" fill="none" stroke="#d0d0d0" stroke-width="1.05"/></svg>
<div class="t" style="left:862.20px;top:170.00px;font-size:10px;color:#e4e4e4;font-weight:400;transform:scaleX(0.8312);">Refresh</div>
<div class="t" style="left:862.20px;top:191.60px;font-size:10px;color:#e4e4e4;font-weight:400;transform:scaleX(0.8878);">Customize this folder...</div>
<div class="t" style="left:862.20px;top:213.00px;font-size:10px;color:#7a7a7a;font-weight:400;transform:scaleX(0.7939);">Paste</div>
<div class="t" style="left:862.20px;top:230.00px;font-size:10px;color:#e4e4e4;font-weight:400;transform:scaleX(0.8607);">Undo Rename</div>
<div class="t" style="left:982.20px;top:230.00px;font-size:10px;color:#e4e4e4;font-weight:400;transform:scaleX(0.9273);">Ctrl+Z</div>
<div class="t" style="left:862.20px;top:246.20px;font-size:10px;color:#e4e4e4;font-weight:400;transform:scaleX(0.8588);">PowerRename</div>
<svg class="s" style="left:842px;top:244.2px;" width="13" height="12" viewBox="0 0 13 12"><rect x="1" y="3.2" width="10" height="5" rx="0.6" fill="#1a80d6"/><path d="M8.6 1.2v9.4M7 1.2h3.2M7 10.6h3.2" stroke="#3fb6f2" stroke-width="1.2"/></svg>
<div class="t" style="left:862.20px;top:262.80px;font-size:10px;color:#e4e4e4;font-weight:400;transform:scaleX(0.8516);">Open Git GUI here</div>
<svg class="s" style="left:842.5px;top:259.8px;" width="12" height="12" viewBox="0 0 12 12"><g transform="rotate(45 6 6)"><rect x="1.6" y="1.6" width="4.2" height="4.2" fill="#ef7b78"/><rect x="6.2" y="1.6" width="4.2" height="4.2" fill="#6cc34b"/><rect x="6.2" y="6.2" width="4.2" height="4.2" fill="#f2d77a"/><rect x="1.6" y="6.2" width="4.2" height="4.2" fill="#78b2f7"/></g><path d="M6 3.2v5.6M4.4 6h3.2" stroke="#3a3a3a" stroke-width="0.55"/></svg>
<div class="t" style="left:862.20px;top:279.20px;font-size:10px;color:#e4e4e4;font-weight:400;transform:scaleX(0.8588);">Open Git Bash here</div>
<svg class="s" style="left:842.5px;top:276.2px;" width="12" height="12" viewBox="0 0 12 12"><g transform="rotate(45 6 6)"><rect x="1.6" y="1.6" width="4.2" height="4.2" fill="#ef7b78"/><rect x="6.2" y="1.6" width="4.2" height="4.2" fill="#6cc34b"/><rect x="6.2" y="6.2" width="4.2" height="4.2" fill="#f2d77a"/><rect x="1.6" y="6.2" width="4.2" height="4.2" fill="#78b2f7"/></g><path d="M6 3.2v5.6M4.4 6h3.2" stroke="#3a3a3a" stroke-width="0.55"/></svg>
<div class="t" style="left:862.20px;top:295.70px;font-size:10px;color:#e4e4e4;font-weight:400;transform:scaleX(0.8762);">Open Folder in VS Codium</div>
<svg class="s" style="left:842px;top:292.7px;" width="14" height="13" viewBox="0 0 14 13"><path d="M7.2 12.2Q3 12 1.6 8.6Q1.2 7.2 2 6.2Q2.4 8 3.6 8.8Q3.4 6.8 4.6 5.6Q4.8 7.4 5.8 8Q6 5.6 5 3.2Q6.6 3.8 7 6.2Q7.8 4.4 7.4 1.8Q9 3 8.6 5.6Q9.8 4.8 10.2 3.4Q11.2 5 10 6.8Q11.6 6.8 12.2 5.6Q12.8 7.6 11.2 8.8Q10 9.6 8.8 9.6L8.4 12.2z" fill="#3f8fe8"/></svg>
<div class="t" style="left:862.20px;top:312.10px;font-size:10px;color:#e4e4e4;font-weight:400;transform:scaleX(0.8588);">PowerRename</div>
<svg class="s" style="left:842px;top:310.1px;" width="13" height="12" viewBox="0 0 13 12"><rect x="1" y="3.2" width="10" height="5" rx="0.6" fill="#1a80d6"/><path d="M8.6 1.2v9.4M7 1.2h3.2M7 10.6h3.2" stroke="#3fb6f2" stroke-width="1.2"/></svg>
<div class="t" style="left:862.20px;top:334.00px;font-size:10px;color:#e4e4e4;font-weight:400;transform:scaleX(0.8387);">Give access to</div>
<svg class="s" style="left:1008px;top:333.6px;" width="7" height="8" viewBox="0 0 7 8"><path d="M1.8 1l3 3-3 3" fill="none" stroke="#d0d0d0" stroke-width="1.05"/></svg>
<div class="t" style="left:862.20px;top:355.60px;font-size:10px;color:#e4e4e4;font-weight:400;transform:scaleX(0.8837);">New</div>
<svg class="s" style="left:1008px;top:355.20000000000005px;" width="7" height="8" viewBox="0 0 7 8"><path d="M1.8 1l3 3-3 3" fill="none" stroke="#d0d0d0" stroke-width="1.05"/></svg>
<div class="t" style="left:862.20px;top:377.30px;font-size:10px;color:#e4e4e4;font-weight:400;transform:scaleX(0.8688);">Properties</div>
<div class="t" style="left:10.50px;top:526.80px;font-size:10px;color:#dcdcdc;font-weight:400;transform:scaleX(0.8920);">3 items</div>
<div class="r" style="left:46px;top:527px;width:1px;height:8px;background:#c8c8c8;"></div>
<svg class="s" style="left:989px;top:523px;" width="15" height="14" viewBox="0 0 15 14"><rect x="1.2" y="1.2" width="11.8" height="11.6" rx="2" fill="#bdbdbd"/><path d="M3 3.6h8.2M3 5.9h8.2M3 8.4h8.2M3 10.6h8.2" stroke="#2a2a2a" stroke-width="0.8"/></svg>
<svg class="s" style="left:1006px;top:523px;" width="15" height="14" viewBox="0 0 15 14"><rect x="1" y="1.2" width="11.8" height="11.6" rx="2" fill="#a9a9a9"/><rect x="2" y="2.2" width="9.8" height="7.8" rx="0.8" fill="#2a2a2a"/><rect x="3" y="3" width="7.2" height="6" fill="#ffffff"/><path d="M2.5 11.3h8.8" stroke="#3a3a3a" stroke-width="0.7"/></svg>
<div class="r" style="left:0px;top:539px;width:1024px;height:36px;background:linear-gradient(90deg,#242429 0%,#20222d 7%,#242428 11%,#252527 21%,#23212d 25%,#281e38 30%,#2a2036 36%,#2a2230 45%,#2a2228 60%,#2a2225 75%,#2a2526 88%,#2b2626 100%);"></div>
<div class="r" style="left:0px;top:538.5px;width:1024px;height:1px;background:rgba(90,90,95,0.55);"></div>
<svg class="s" style="left:15px;top:548px;" width="17" height="17" viewBox="0 0 17 17"><defs><linearGradient id="sun" x1="0" y1="0" x2="1" y2="1"><stop offset="0" stop-color="#f7c12a"/><stop offset="1" stop-color="#f2640e"/></linearGradient></defs><circle cx="8.4" cy="8.3" r="7.6" fill="url(#sun)"/></svg>
<div class="t" style="left:37.80px;top:547.00px;font-size:10px;color:#f0f0f0;font-weight:400;transform:scaleX(0.8617);-webkit-text-stroke:0.55px #f0f0f0">26°C</div>
<div class="t" style="left:37.80px;top:558.80px;font-size:10px;color:#d6d6d6;font-weight:400;transform:scaleX(0.8995);">Sunny</div>
<svg class="s" style="left:320px;top:548px;" width="19" height="19" viewBox="0 0 19 19"><defs><linearGradient id="win" x1="0" y1="0" x2="1" y2="1"><stop offset="0" stop-color="#75dcff"/><stop offset="1" stop-color="#1796e6"/></linearGradient></defs><rect x="0.7" y="0.7" width="8" height="8" fill="url(#win)"/><rect x="9.8" y="0.7" width="8" height="8" fill="url(#win)"/><rect x="0.7" y="9.8" width="8" height="8" fill="url(#win)"/><rect x="9.8" y="9.8" width="8" height="8" fill="url(#win)"/></svg>
<div class="r" style="left:348px;top:545px;width:165px;height:24px;border-radius:12px;background:linear-gradient(90deg,#3b3747,#3d3540 60%,#3e3539);box-shadow:inset 0 0 0 1px rgba(255,255,255,0.07)"></div>
<svg class="s" style="left:355px;top:550px;" width="14" height="14" viewBox="0 0 14 14"><circle cx="6" cy="5.8" r="4.2" fill="none" stroke="#e8e8e8" stroke-width="1.3"/><path d="M9 8.8l3.2 3.2" stroke="#e8e8e8" stroke-width="1.4"/></svg>
<div class="t" style="left:375.00px;top:552.50px;font-size:11px;color:#dedede;font-weight:400;transform:scaleX(0.9068);">Search</div>
<svg class="s" style="left:468px;top:543px;" width="44" height="27" viewBox="0 0 44 27"><defs><linearGradient id="bird" x1="0" y1="0" x2="1" y2="1"><stop offset="0" stop-color="#6fa8e0"/><stop offset="0.6" stop-color="#5c8fd0"/><stop offset="1" stop-color="#8a7ac8"/></linearGradient></defs><path d="M6 12Q11 17 17.5 20.8L39 21.4" fill="none" stroke="#c0ad78" stroke-width="1.1"/><path d="M9 9l2.5 5M31 8l3.5 12" fill="none" stroke="#8a7a5a" stroke-width="0.7"/><ellipse cx="7.7" cy="11.3" rx="1.6" ry="0.9" fill="#f0a830"/><ellipse cx="13.3" cy="13.4" rx="1.2" ry="2.1" fill="#f0a830" transform="rotate(20 13.3 13.4)"/><ellipse cx="7.8" cy="17.5" rx="1.7" ry="0.95" fill="#f0a830"/><ellipse cx="29.5" cy="10" rx="0.9" ry="1.6" fill="#f0a830"/><ellipse cx="37.6" cy="11.8" rx="1" ry="1.7" fill="#f0a830" transform="rotate(30 37.6 11.8)"/><ellipse cx="34.3" cy="14.4" rx="1.3" ry="0.8" fill="#f0a830"/><path d="M14.6 6.6Q15.5 5.2 17.5 5.4Q19.5 5.8 21.5 8Q24.5 10.5 27 13.5Q29 16 30.8 18L28 18.6Q25.5 20 21.5 20.3Q19.3 20 18.6 16.5Q18 12 16.6 9.2Q15.6 7.6 14.6 6.6z" fill="url(#bird)"/><path d="M19.5 20v1M23 20v1" stroke="#6a8fc0" stroke-width="0.7"/></svg>
<svg class="s" style="left:521px;top:548px;" width="20" height="20" viewBox="0 0 20 20"><defs><linearGradient id="cp1" x1="0" y1="0" x2="0.3" y2="1"><stop offset="0" stop-color="#1a9af0"/><stop offset="0.5" stop-color="#3ac8c8"/><stop offset="1" stop-color="#9ad84a"/></linearGradient><linearGradient id="cp2" x1="0" y1="0" x2="0.3" y2="1"><stop offset="0" stop-color="#8a5cf0"/><stop offset="0.6" stop-color="#d86ad0"/><stop offset="1" stop-color="#f888a8"/></linearGradient></defs><path d="M4.5 3Q5.6 1.4 8 1.4H12.5Q10.6 2 9.8 4.5L7.6 11.8Q7 13.8 4.6 13.8H3Q1.2 13.8 1.8 11.6z" fill="url(#cp1)"/><path d="M10.4 5.4Q11 4 12.6 4H16.6Q18.8 4 18.2 6.2L16.4 12.6Q15.8 14.4 13.8 14.4H8.6Q9.8 13.8 10.2 12.4z" fill="url(#cp2)"/><rect x="5.6" y="12.6" width="13" height="5.6" rx="2" fill="#ffd21f"/><path d="M8 14.2v2.4M8 14.2h1.4v1.2H8M10.8 14.2v2.4M10.8 14.2h1.4v1.2h-1.4M11.6 15.4l0.8 1.2M13.9 14.2v2.4h1.5M13.9 14.2h1.5M13.9 15.4h1.2" fill="none" stroke="#3a2a00" stroke-width="0.6"/></svg>
<div class="r" style="left:549px;top:542px;width:30px;height:30px;border-radius:4px;background:#302e36;box-shadow:inset 0 0 0 1px rgba(255,255,255,0.04)"></div>
<svg class="s" style="left:554px;top:548px;" width="20" height="18" viewBox="0 0 20 18"><path d="M0.8 2.3Q0.8 1 2 1H7L9 2.8H18Q19.2 2.8 19.2 4V6H0.8z" fill="#e7a40e"/><rect x="0.8" y="4.2" width="18.4" height="13" rx="0.8" fill="#ffd04a"/><rect x="4.2" y="11.5" width="11.4" height="5.7" rx="1" fill="#1a86d8"/><path d="M6.5 13.5h7" stroke="#0f5fa8" stroke-width="0.8"/></svg>
<div class="r" style="left:557.5px;top:569px;width:12px;height:2.2px;background:#e6a8f0;border-radius:1px"></div>
<svg class="s" style="left:587px;top:548px;" width="20" height="19" viewBox="0 0 20 19"><circle cx="9.5" cy="8.6" r="8.6" fill="#7b11cc"/><path d="M3.5 6.6c1.5-1 3.5-1 5 0.6h2c1.5-1.6 3.5-1.6 5-0.6v2.6c-1.5 1.2-3.5 1.2-5-0.4h-2c-1.5 1.6-3.5 1.6-5 0.4z" fill="#ffffff"/><circle cx="6" cy="8" r="1.1" fill="#7b11cc"/><circle cx="13" cy="8" r="1.1" fill="#7b11cc"/><circle cx="15" cy="14.4" r="3.6" fill="#ff6a1a"/><circle cx="15" cy="14.4" r="1.8" fill="#6a2ad0"/></svg>
<svg class="s" style="left:620px;top:548px;" width="20" height="19" viewBox="0 0 20 19"><defs><radialGradient id="tb" cx="0.5" cy="0.5" r="0.6"><stop offset="0" stop-color="#3a8cff"/><stop offset="1" stop-color="#1663d0"/></radialGradient></defs><path d="M9.5 1c5 0 8.8 3.6 8.8 8.5S14.5 18 9.5 18 0.8 14.2 0.8 9.6c0-2 0.8-4 2.2-5.6-0.2 1.2 0 2.2 0.6 3C4.5 3.6 6.8 1 9.5 1z" fill="url(#tb)"/><ellipse cx="9.6" cy="10" rx="4.6" ry="3.8" fill="#d8ecff"/><path d="M5.8 8.6l3.8 2.6 3.8-2.6" fill="none" stroke="#7fb2e8" stroke-width="0.8"/></svg>
<svg class="s" style="left:653px;top:548px;" width="19" height="19" viewBox="0 0 19 19"><path d="M6 4.5V2.2Q6 1 7.2 1h4.6Q13 1 13 2.2V4.5" fill="none" stroke="#39b8f0" stroke-width="1.3"/><path d="M1 4.5H18V16.3Q18 18 16.3 18H2.7Q1 18 1 16.3z" fill="#f6f6f6"/><rect x="5.6" y="7" width="3.4" height="3.4" fill="#f25022"/><rect x="9.9" y="7" width="3.4" height="3.4" fill="#7fba00"/><rect x="5.6" y="11.3" width="3.4" height="3.4" fill="#00a4ef"/><rect x="9.9" y="11.3" width="3.4" height="3.4" fill="#ffb900"/></svg>
<svg class="s" style="left:686px;top:549px;" width="20" height="16" viewBox="0 0 20 16"><path d="M1 8.2L4 5.3 8.2 9.5 5.3 12.4z" fill="#1b5fc4"/><path d="M5.3 12.4L15.8 1.2 18.8 4.2 8.2 15.2z" fill="#3d9af0"/></svg>
<svg class="s" style="left:829px;top:554px;" width="10" height="7" viewBox="0 0 10 7"><path d="M1 5.6l4-4 4 4" fill="none" stroke="#e8e8e8" stroke-width="1.1"/></svg>
<div class="t" style="left:853.50px;top:553.90px;font-size:10px;color:#e8e8e8;font-weight:400;transform:scaleX(0.7983);">ENG</div>
<svg class="s" style="left:884px;top:551px;" width="14" height="11" viewBox="0 0 14 11"><path d="M1.2 4.6a8 8 0 0 1 11.6 0" fill="none" stroke="#9a9a9a" stroke-width="1"/><path d="M3.2 6.6a5.2 5.2 0 0 1 7.6 0" fill="none" stroke="#e8e8e8" stroke-width="1"/><path d="M5.2 8.4a2.4 2.4 0 0 1 3.6 0" fill="none" stroke="#e8e8e8" stroke-width="1"/><circle cx="7" cy="9.6" r="0.9" fill="#e8e8e8"/></svg>
<svg class="s" style="left:901px;top:552px;" width="15" height="11" viewBox="0 0 15 11"><path d="M1.2 3.8H3.2L6.8 1v9L3.2 7.2H1.2z" fill="none" stroke="#e8e8e8" stroke-width="1" stroke-linejoin="round"/><path d="M8.6 3.4a2.8 2.8 0 0 1 0 4.2M10.4 2a4.8 4.8 0 0 1 0 7M12.2 0.8a6.6 6.6 0 0 1 0 9.4" fill="none" stroke="#e8e8e8" stroke-width="0.95"/></svg>
<svg class="s" style="left:919px;top:552px;" width="15" height="10" viewBox="0 0 15 10"><rect x="1.2" y="1.5" width="10.8" height="7" rx="1.6" fill="none" stroke="#e8e8e8" stroke-width="1"/><rect x="2.8" y="3.1" width="1.6" height="3.8" fill="#e8e8e8"/><path d="M13.3 4v2" stroke="#e8e8e8" stroke-width="1.2"/></svg>
<div class="t" style="left:953.70px;top:547.30px;font-size:10px;color:#eaeaea;font-weight:400;transform:scaleX(0.8899);">10:03 AM</div>
<div class="t" style="left:945.40px;top:558.90px;font-size:10px;color:#eaeaea;font-weight:400;transform:scaleX(0.9171);">10/30/2023</div>
<svg class="s" style="left:997px;top:551px;" width="12" height="13" viewBox="0 0 12 13"><path d="M6 1.2c2.4 0 4 1.8 4 4.2v2.8l1.2 2H0.8l1.2-2V5.4C2 3 3.6 1.2 6 1.2z" fill="#e8a8f0"/><path d="M4.2 11.4h3.6a1.8 1.6 0 0 1-3.6 0z" fill="#e8a8f0"/></svg>
</body></html>
